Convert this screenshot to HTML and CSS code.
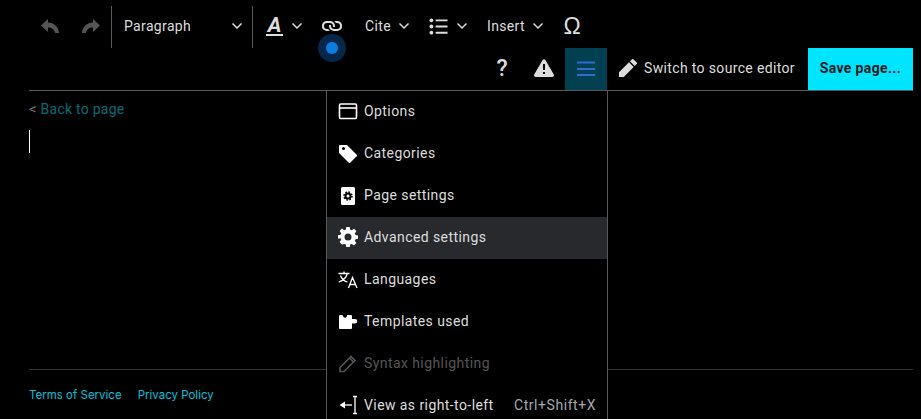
FILE: index.html
```html
<!DOCTYPE html>
<html lang="en">
<head>
    <meta charset="UTF-8">
    <meta name="viewport" content="width=device-width, initial-scale=1.0">
    <title>Edit page</title>
    <link rel="stylesheet" href="styles.css">
</head>
<body>
    <div class="page">
        <div class="toolbar">
            <div class="tool-row">
                <button class="tool tool-icon disabled">
                    <svg class="icon" viewBox="0 0 20 20"><path d="M8 3 1 9.500 8 16v-4.500c3.500 0 6.500 1.500 7 5.500h4c-.5-6-5-10.500-11-10.500z"/></svg>
                </button>
                <button class="tool tool-icon disabled">
                    <svg class="icon" viewBox="0 0 20 20"><path d="M12 3l7 6.500-7 6.500v-4.500c-3.500 0-6.500 1.500-7 5.500H1c.5-6 5-10.500 11-10.500z"/></svg>
                </button>
                <div class="separator"></div>
                <button class="tool tool-format">
                    <span>Paragraph</span>
                    <svg class="chevron" viewBox="0 0 12 12"><path d="M1.500 3.500 6 8l4.500-4.500"/></svg>
                </button>
                <div class="separator"></div>
                <button class="tool tool-style">
                    <span class="style-letter">A</span>
                    <svg class="chevron" viewBox="0 0 12 12"><path d="M1.500 3.500 6 8l4.500-4.500"/></svg>
                </button>
                <button class="tool tool-icon">
                    <svg class="icon" viewBox="0 0 20 20"><path d="M4.830 15h2.910a4.880 4.880 0 0 1-1.550-2H5a3 3 0 1 1 0-6h3a3 3 0 0 1 2.820 4h2.100a4.900 4.900 0 0 0 .08-1 5 5 0 0 0-5-5H4.830a5 5 0 0 0 0 10z"/><path d="M15.170 5h-2.910a4.880 4.880 0 0 1 1.550 2H15a3 3 0 1 1 0 6h-3a3 3 0 0 1-2.820-4h-2.100a4.900 4.900 0 0 0-.08 1 5 5 0 0 0 5 5h3.170a5 5 0 0 0 0-10z"/></svg>
                </button>
                <button class="tool tool-cite">
                    <span>Cite</span>
                    <svg class="chevron" viewBox="0 0 12 12"><path d="M1.500 3.500 6 8l4.500-4.500"/></svg>
                </button>
                <button class="tool tool-list">
                    <svg class="icon" viewBox="0 0 20 20"><circle cx="2.500" cy="3.500" r="2"/><circle cx="2.500" cy="10" r="2"/><circle cx="2.500" cy="16.500" r="2"/><path d="M7 2.500h12.500v2H7zM7 9h12.500v2H7zM7 15.500h12.500v2H7z"/></svg>
                    <svg class="chevron" viewBox="0 0 12 12"><path d="M1.500 3.500 6 8l4.500-4.500"/></svg>
                </button>
                <button class="tool tool-insert">
                    <span>Insert</span>
                    <svg class="chevron" viewBox="0 0 12 12"><path d="M1.500 3.500 6 8l4.500-4.500"/></svg>
                </button>
                <button class="tool tool-icon tool-omega">Ω</button>
            </div>
            <div class="tool-row tool-row-right">
                <button class="tool tool-icon tool-help">?</button>
                <button class="tool tool-icon">
                    <svg class="icon" viewBox="0 0 20 20"><path d="M11.530 2.300A1.850 1.850 0 0 0 10 1.210 1.850 1.850 0 0 0 8.480 2.300L.36 16.360C-.48 17.810.21 19 1.880 19h16.240c1.670 0 2.360-1.190 1.520-2.640zM11 16H9v-2h2zm0-4H9V6h2z"/></svg>
                </button>
                <div class="menu-anchor">
                    <button class="tool tool-icon tool-active">
                        <svg class="icon" viewBox="0 0 20 20"><path d="M1 2.500h18v2H1zM1 9h18v2H1zM1 15h18v2H1z"/></svg>
                    </button>
                    <div class="menu">
                        <div class="menu-item">
                            <svg class="icon icon-stroke" viewBox="0 0 20 20"><rect x="1.500" y="3" width="17" height="14.500" rx="1.200"/><path d="M1.500 7h17"/></svg>
                            <span>Options</span>
                        </div>
                        <div class="menu-item">
                            <svg class="icon" viewBox="0 0 20 20"><path d="M1 3v6.500a1 1 0 0 0 .3.700l9.500 9.500a1 1 0 0 0 1.400 0l6.500-6.500a1 1 0 0 0 0-1.400L9.200 2.300a1 1 0 0 0-.7-.3H2a1 1 0 0 0-1 1zm4.500 4A1.500 1.500 0 1 1 7 5.500 1.500 1.500 0 0 1 5.500 7z"/></svg>
                            <span>Categories</span>
                        </div>
                        <div class="menu-item">
                            <svg class="icon" viewBox="0 0 20 20"><rect x="3" y="2" width="14" height="18" rx="1.500"/><circle class="gear-ring" cx="10" cy="11" r="2.500"/><circle class="gear-teeth" cx="10" cy="11" r="4"/></svg>
                            <span>Page settings</span>
                        </div>
                        <div class="menu-item menu-item-hover">
                            <svg class="icon" viewBox="0 0 20 20"><path fill-rule="evenodd" d="M8.300 0h3.400l.5 2.700 1.500.6 2.300-1.600 2.400 2.400-1.600 2.300.6 1.500 2.700.5v3.400l-2.700.5-.6 1.500 1.600 2.300-2.400 2.400-2.300-1.600-1.500.6-.5 2.700H8.300l-.5-2.700-1.500-.6L4 17.500l-2.400-2.400 1.600-2.300-.6-1.500L-.1 11.800V8.300l2.700-.5.6-1.500L1.600 4 4 1.600l2.300 1.600 1.500-.6zM10 6.500a3.500 3.500 0 1 0 0 7 3.500 3.500 0 0 0 0-7z"/></svg>
                            <span>Advanced settings</span>
                        </div>
                        <div class="menu-item">
                            <svg class="icon icon-stroke icon-thin" viewBox="0 0 20 20"><path d="M.5 4.500h11M6 2.500v2M9.300 4.500c-1 4-4 7-8.500 8.500M2.500 6.500c1 3 3.500 5.500 7 6.500M10.500 19l4-10.500 4.500 10.500M12 15.500h5.500"/></svg>
                            <span>Languages</span>
                        </div>
                        <div class="menu-item">
                            <svg class="icon" viewBox="0 0 20 20"><path d="M1 5a1 1 0 0 1 1-1h2.500c.5 1.800 1.500 2.700 2.700 2.700S9 5.800 9 4h4a1 1 0 0 1 1 1v3h3a2.200 2.200 0 0 1 0 4.500h-3V17a1 1 0 0 1-1 1H2a1 1 0 0 1-1-1z"/></svg>
                            <span>Templates used</span>
                        </div>
                        <div class="menu-item menu-item-disabled">
                            <svg class="icon icon-stroke" viewBox="0 0 20 20"><path d="M2 14.500V18.500h4L17 7.500 13 3.500zM11.500 5l4 4"/></svg>
                            <span>Syntax highlighting</span>
                        </div>
                        <div class="menu-item">
                            <svg class="icon icon-stroke icon-thin" viewBox="0 0 20 20"><path d="M5 10h9"/><path class="arrow-head" d="M1.500 10 7 6.500v7z"/><path d="M17 2v16M15 1.500h4M15 18.500h4"/></svg>
                            <span>View as right-to-left</span>
                            <span class="shortcut">Ctrl+Shift+X</span>
                        </div>
                    </div>
                </div>
                <button class="tool tool-switch">
                    <svg class="icon" viewBox="0 0 20 20"><path d="M16.770 8l1.940-2a1 1 0 0 0 0-1.410l-3.340-3.300a1 1 0 0 0-1.410 0L12 3.230zM1 14.250V19h4.750l9.960-9.960-4.750-4.750z"/></svg>
                    <span>Switch to source editor</span>
                </button>
                <button class="save-button">Save page...</button>
            </div>
            <div class="pulse"><div class="pulse-dot"></div></div>
        </div>

        <div class="content">
            <div class="back-link"><span class="back-arrow">&lt;</span> <a href="#">Back to page</a></div>
            <div class="editor-cursor"></div>
        </div>

        <div class="footer">
            <a href="#">Terms of Service</a>
            <a href="#">Privacy Policy</a>
        </div>
    </div>
</body>
</html>
```

FILE: styles.css
```css
* {
    margin: 0;
    padding: 0;
    box-sizing: border-box;
}

body {
    font-family: 'Roboto', 'Liberation Sans', sans-serif;
    background-color: #000;
    color: #ddd;
    height: 100vh;
    overflow: hidden;
}

.page {
    display: flex;
    flex-direction: column;
    height: 100vh;
    padding: 0 8px 0 29px;
}

/* ツールバー */
.toolbar {
    position: relative;
    padding-top: 6px;
    border-bottom: 1px solid #54595d;
}

.tool-row {
    display: flex;
    height: 42px;
}

.tool-row-right {
    justify-content: flex-end;
}

.tool {
    display: flex;
    align-items: center;
    height: 42px;
    padding-bottom: 2px;
    background: none;
    border: none;
    color: #ddd;
    font-family: inherit;
    font-size: 14px;
    letter-spacing: 0.35px;
}

.tool-icon {
    justify-content: center;
    width: 42px;
}

.tool-icon.disabled {
    width: 41px;
}

.disabled .icon {
    fill: #555;
}

.icon {
    width: 20px;
    height: 20px;
    fill: #ddd;
    flex-shrink: 0;
}

.chevron {
    width: 12px;
    height: 12px;
    fill: none;
    stroke: #ddd;
    stroke-width: 1.500;
    flex-shrink: 0;
}

.separator {
    width: 1px;
    height: 42px;
    background-color: #54595d;
}

.tool-format {
    width: 140px;
    padding-left: 12px;
    justify-content: space-between;
    padding-right: 9px;
}

.tool-style {
    width: 58px;
    padding-left: 13px;
    gap: 8px;
}

.style-letter {
    width: 17px;
    text-align: center;
    font-size: 21px;
    font-weight: 700;
    font-style: italic;
    line-height: 18px;
    letter-spacing: 0;
    border-bottom: 2px solid #ddd;
}

.tool-cite {
    width: 64px;
    padding-left: 12px;
    gap: 7px;
}

.tool-list {
    width: 58px;
    padding-left: 12px;
    gap: 8px;
}

.tool-list .icon {
    width: 19px;
    height: 19px;
}

.tool-insert {
    width: 76px;
    padding-left: 12px;
    gap: 7px;
}

.tool-omega {
    font-family: 'Liberation Sans', sans-serif;
    font-size: 23px;
    letter-spacing: 0;
}

.tool-help {
    font-size: 23px;
    font-weight: 500;
    letter-spacing: 0;
}

.tool-active {
    padding-bottom: 0;
    background-color: #004050;
}

.tool-active .icon {
    fill: #2f6bd0;
}

.tool-switch {
    width: 201px;
    padding-left: 11px;
    gap: 6px;
}

.save-button {
    width: 105px;
    height: 42px;
    padding-bottom: 2px;
    background-color: #00e5ff;
    border: none;
    color: #101820;
    font-family: inherit;
    font-size: 14px;
    font-weight: 700;
    letter-spacing: 0.35px;
}

.pulse {
    position: absolute;
    left: 289px;
    top: 34px;
    width: 28px;
    height: 28px;
    display: flex;
    align-items: center;
    justify-content: center;
    border-radius: 50%;
    background-color: #04274a;
}

.pulse-dot {
    width: 12px;
    height: 12px;
    border-radius: 50%;
    background-color: #0a7fe0;
}

/* メニュー */
.menu-anchor {
    position: relative;
}

.menu {
    position: absolute;
    top: 43px;
    right: -1px;
    width: 282px;
    height: 340px;
    background-color: #000;
    border-left: 1px solid #54595d;
    border-right: 1px solid #54595d;
    z-index: 10;
}

.menu-item {
    display: flex;
    align-items: center;
    height: 42px;
    padding: 0 11px 2px;
    gap: 6px;
    font-size: 14px;
    letter-spacing: 0.42px;
    color: #ddd;
}

.menu-item .icon {
    fill: #fff;
}

.menu-item .icon-stroke {
    fill: none;
    stroke: #fff;
    stroke-width: 1.600;
}

.menu-item .icon-thin {
    stroke-width: 1.300;
}

.menu-item .arrow-head {
    fill: #fff;
    stroke: none;
}

.gear-ring {
    fill: none;
    stroke: #000;
    stroke-width: 2;
}

.gear-teeth {
    fill: none;
    stroke: #000;
    stroke-width: 1.500;
    stroke-dasharray: 1.570 1.570;
}

.menu-item-hover {
    background-color: #27292d;
}

.menu-item-disabled {
    color: #555;
}

.menu-item-disabled .icon-stroke {
    stroke: #555;
}

.shortcut {
    margin-left: auto;
    color: #a2a9b1;
    letter-spacing: 0.55px;
}

/* 本文 */
.content {
    flex: 1;
    padding-top: 10px;
}

.back-link {
    font-size: 14px;
    line-height: 17px;
    letter-spacing: 0.25px;
    color: #72777d;
}

.back-arrow {
    font-size: 15px;
}

.back-link a {
    color: #006e7a;
    text-decoration: none;
}

.editor-cursor {
    width: 1px;
    height: 23px;
    margin-top: 12px;
    background-color: #fff;
}

.footer {
    display: flex;
    align-items: center;
    gap: 16px;
    height: 50px;
    padding-top: 1px;
    border-top: 1px solid #333;
}

.footer a {
    font-family: 'Inter', 'Liberation Sans', sans-serif;
    font-size: 11.500px;
    color: #00c0d8;
    text-decoration: none;
}
```
